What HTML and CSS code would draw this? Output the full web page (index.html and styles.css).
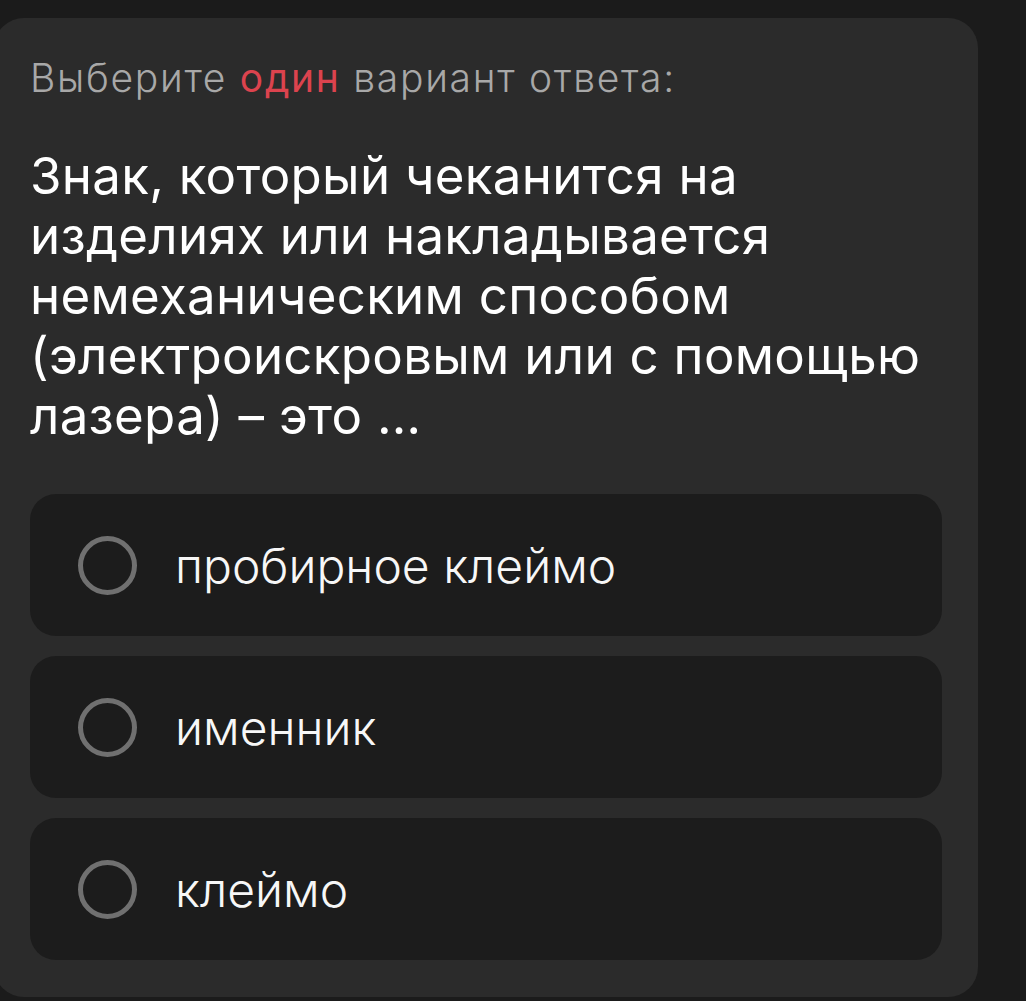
FILE: index.html
```html
<!DOCTYPE html>
<html lang="ru">
<head>
  <meta charset="UTF-8">
  <meta name="viewport" content="width=device-width, initial-scale=1">
  <title>Вопрос</title>
  <link rel="stylesheet" href="styles.css">
</head>
<body>

  <div class="question-card">
    <p class="hint">Выберите <span class="accent">один</span> вариант ответа:</p>

    <h1 class="question">Знак, который чеканится на изделиях или накладывается немеханическим способом (электроискровым или с помощью лазера) – это …</h1>

    <!-- Answer options -->
    <div class="answers">
      <label class="answer">
        <span class="radio"></span>
        <span class="answer-text">пробирное клеймо</span>
      </label>
      <label class="answer">
        <span class="radio"></span>
        <span class="answer-text">именник</span>
      </label>
      <label class="answer">
        <span class="radio"></span>
        <span class="answer-text">клеймо</span>
      </label>
    </div>
  </div>

</body>
</html>
```

FILE: styles.css
```css
/* Base */
body {
  margin: 0;
  padding: 0;
  background-color: #1b1b1b;
  font-family: Inter, "Open Sans", sans-serif;
  color: #fff;
  overflow: hidden;
}
/* Card */
.question-card {
  box-sizing: border-box;
  background-color: #2b2b2b;
  margin: 18px 48px 0 -6px;
  padding: 37px 36px 36px;
  border-radius: 30px;
  height: 979px;
}
.hint {
  margin: 0;
  font-size: 39px;
  font-weight: 300;
  line-height: 46px;
  letter-spacing: 1.7px;
  color: #a8a8a8;
}
.accent {
  color: #dc434e;
  font-weight: 400;
}
.question {
  margin: 45px 0 0;
  font-size: 51px;
  font-weight: 400;
  line-height: 60px;
  letter-spacing: 0.3px;
  color: #fff;
  max-width: 910px;
}
/* Options */
.answers {
  display: flex;
  flex-direction: column;
  gap: 20px;
  margin-top: 48px;
}
.answer {
  display: flex;
  align-items: center;
  height: 142px;
  padding: 0 48px;
  background-color: #1c1c1c;
  border-radius: 26px;
  cursor: pointer;
}
.radio {
  flex: none;
  width: 49px;
  height: 49px;
  border: 5px solid #707070;
  border-radius: 50%;
  margin-right: 38px;
}
.answer-text {
  font-size: 48px;
  font-weight: 300;
  color: #f7f7f7;
}
```
